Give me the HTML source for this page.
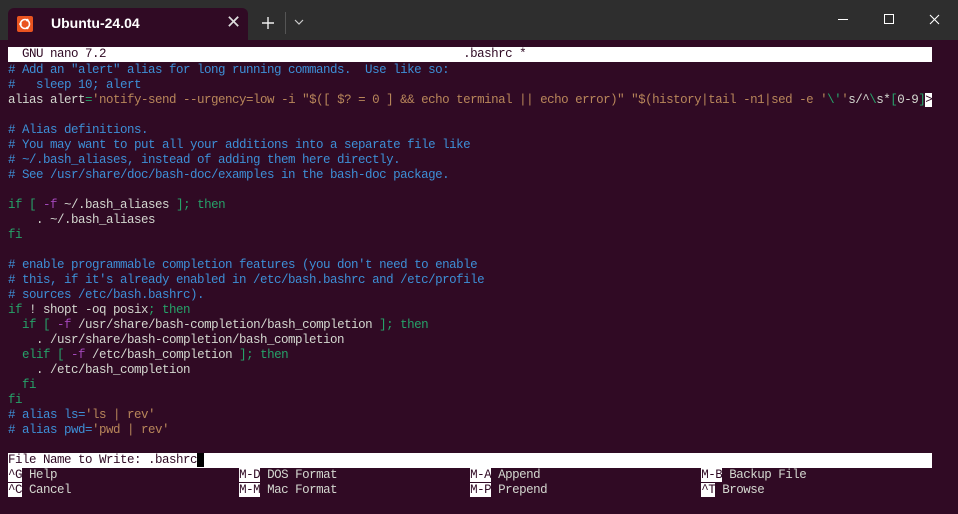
<!DOCTYPE html>
<html><head><meta charset="utf-8"><style>
html,body{margin:0;padding:0;width:958px;height:514px;overflow:hidden;background:#2e2e2e;}
#tb{position:absolute;left:0;top:0;width:958px;height:40px;background:#2e2e2e;}
#tab{position:absolute;left:8px;top:8px;width:240px;height:32px;background:#300a24;border-radius:6px 6px 0 0;}
#tab .ic{position:absolute;left:9px;top:8px;width:16px;height:16px;background:#e95420;border-radius:2px;}
#tab .t{position:absolute;left:43px;top:7px;color:#fff;font:bold 14px "Liberation Sans",sans-serif;}
#tab .x{position:absolute;left:218px;top:4px;color:#ddd;font:18px "Liberation Sans",sans-serif;}
#term{position:absolute;left:0;top:40px;width:958px;height:474px;background:#300a24;}
.r{position:absolute;left:8px;height:15px;line-height:15px;font:12.5px "Liberation Mono",monospace;letter-spacing:-0.5px;color:#d3d7cf;white-space:pre;}
.c{color:#3d8fd6}.s{color:#b8865a}.g{color:#26a269}.p{color:#a347ba}
.inv{background:#fff;color:#300a24}
</style></head><body>
<div id="tb">
<div id="tab"><div class="ic"><svg width="16" height="16" viewBox="0 0 16 16"><circle cx="8" cy="8" r="4.5" fill="none" stroke="#fff" stroke-width="1.6"/><circle cx="3.5" cy="8" r="1.3" fill="#fff"/><circle cx="10.3" cy="4.1" r="1.3" fill="#fff"/><circle cx="10.3" cy="11.9" r="1.3" fill="#fff"/></svg></div><div class="t">Ubuntu-24.04</div><div class="x">✕</div></div>
<svg style="position:absolute;left:261px;top:16px" width="14" height="14"><path d="M7 1V13M1 7H13" stroke="#eee" stroke-width="1.4"/></svg>
<div style="position:absolute;left:285px;top:12px;width:1px;height:22px;background:#555"></div>
<svg style="position:absolute;left:294px;top:19px" width="10" height="6"><path d="M1 1L5 5L9 1" stroke="#ccc" fill="none" stroke-width="1.2"/></svg>
<div style="position:absolute;left:838px;top:19px;width:10px;height:1px;background:#fff"></div>
<div style="position:absolute;left:884px;top:14px;width:8px;height:8px;border:1px solid #fff"></div>
<svg style="position:absolute;left:929px;top:14px" width="11" height="11"><path d="M1 1L10 10M10 1L1 10" stroke="#fff" stroke-width="1.1"/></svg>
</div>
<div id="term"></div>
<div class="r inv" style="top:47px;width:924px">  GNU nano 7.2                                                   .bashrc *</div>
<div class="r c" style="top:63px"># Add an "alert" alias for long running commands.  Use like so:</div>
<div class="r c" style="top:78px">#   sleep 10; alert</div>
<div class="r" style="top:93px">alias alert<span class="g">=</span><span class="s">'notify-send --urgency=low -i "$([ $? = 0 ] &amp;&amp; echo terminal || echo error)" "$(history|tail -n1|sed -e '</span><span class="g">\'</span><span class="s">'</span>s/^<span class="g">\</span>s*<span class="g">[</span>0-9<span class="g">]</span><span class="inv">&gt;</span></div>
<div class="r c" style="top:123px"># Alias definitions.</div>
<div class="r c" style="top:138px"># You may want to put all your additions into a separate file like</div>
<div class="r c" style="top:153px"># ~/.bash_aliases, instead of adding them here directly.</div>
<div class="r c" style="top:168px"># See /usr/share/doc/bash-doc/examples in the bash-doc package.</div>
<div class="r" style="top:198px"><span class="g">if [ </span><span class="p">-f</span> ~/.bash_aliases <span class="g">]; then</span></div>
<div class="r" style="top:213px">    . ~/.bash_aliases</div>
<div class="r g" style="top:228px">fi</div>
<div class="r c" style="top:258px"># enable programmable completion features (you don't need to enable</div>
<div class="r c" style="top:273px"># this, if it's already enabled in /etc/bash.bashrc and /etc/profile</div>
<div class="r c" style="top:288px"># sources /etc/bash.bashrc).</div>
<div class="r" style="top:303px"><span class="g">if</span> ! shopt -oq posix<span class="g">; then</span></div>
<div class="r" style="top:318px">  <span class="g">if [ </span><span class="p">-f</span> /usr/share/bash-completion/bash_completion <span class="g">]; then</span></div>
<div class="r" style="top:333px">    . /usr/share/bash-completion/bash_completion</div>
<div class="r" style="top:348px">  <span class="g">elif [ </span><span class="p">-f</span> /etc/bash_completion <span class="g">]; then</span></div>
<div class="r" style="top:363px">    . /etc/bash_completion</div>
<div class="r g" style="top:378px">  fi</div>
<div class="r g" style="top:393px">fi</div>
<div class="r c" style="top:408px"># alias ls=<span class="s">'ls | rev'</span></div>
<div class="r c" style="top:423px"># alias pwd=<span class="s">'pwd | rev'</span></div>
<div class="r inv" style="top:453px;width:924px">File Name to Write: .bashrc<span style="background:#000"> </span></div>
<div class="r" style="top:468px"><span class="inv">^G</span> Help                          <span class="inv">M-D</span> DOS Format                   <span class="inv">M-A</span> Append                       <span class="inv">M-B</span> Backup File</div>
<div class="r" style="top:483px"><span class="inv">^C</span> Cancel                        <span class="inv">M-M</span> Mac Format                   <span class="inv">M-P</span> Prepend                      <span class="inv">^T</span> Browse</div>
</body></html>
